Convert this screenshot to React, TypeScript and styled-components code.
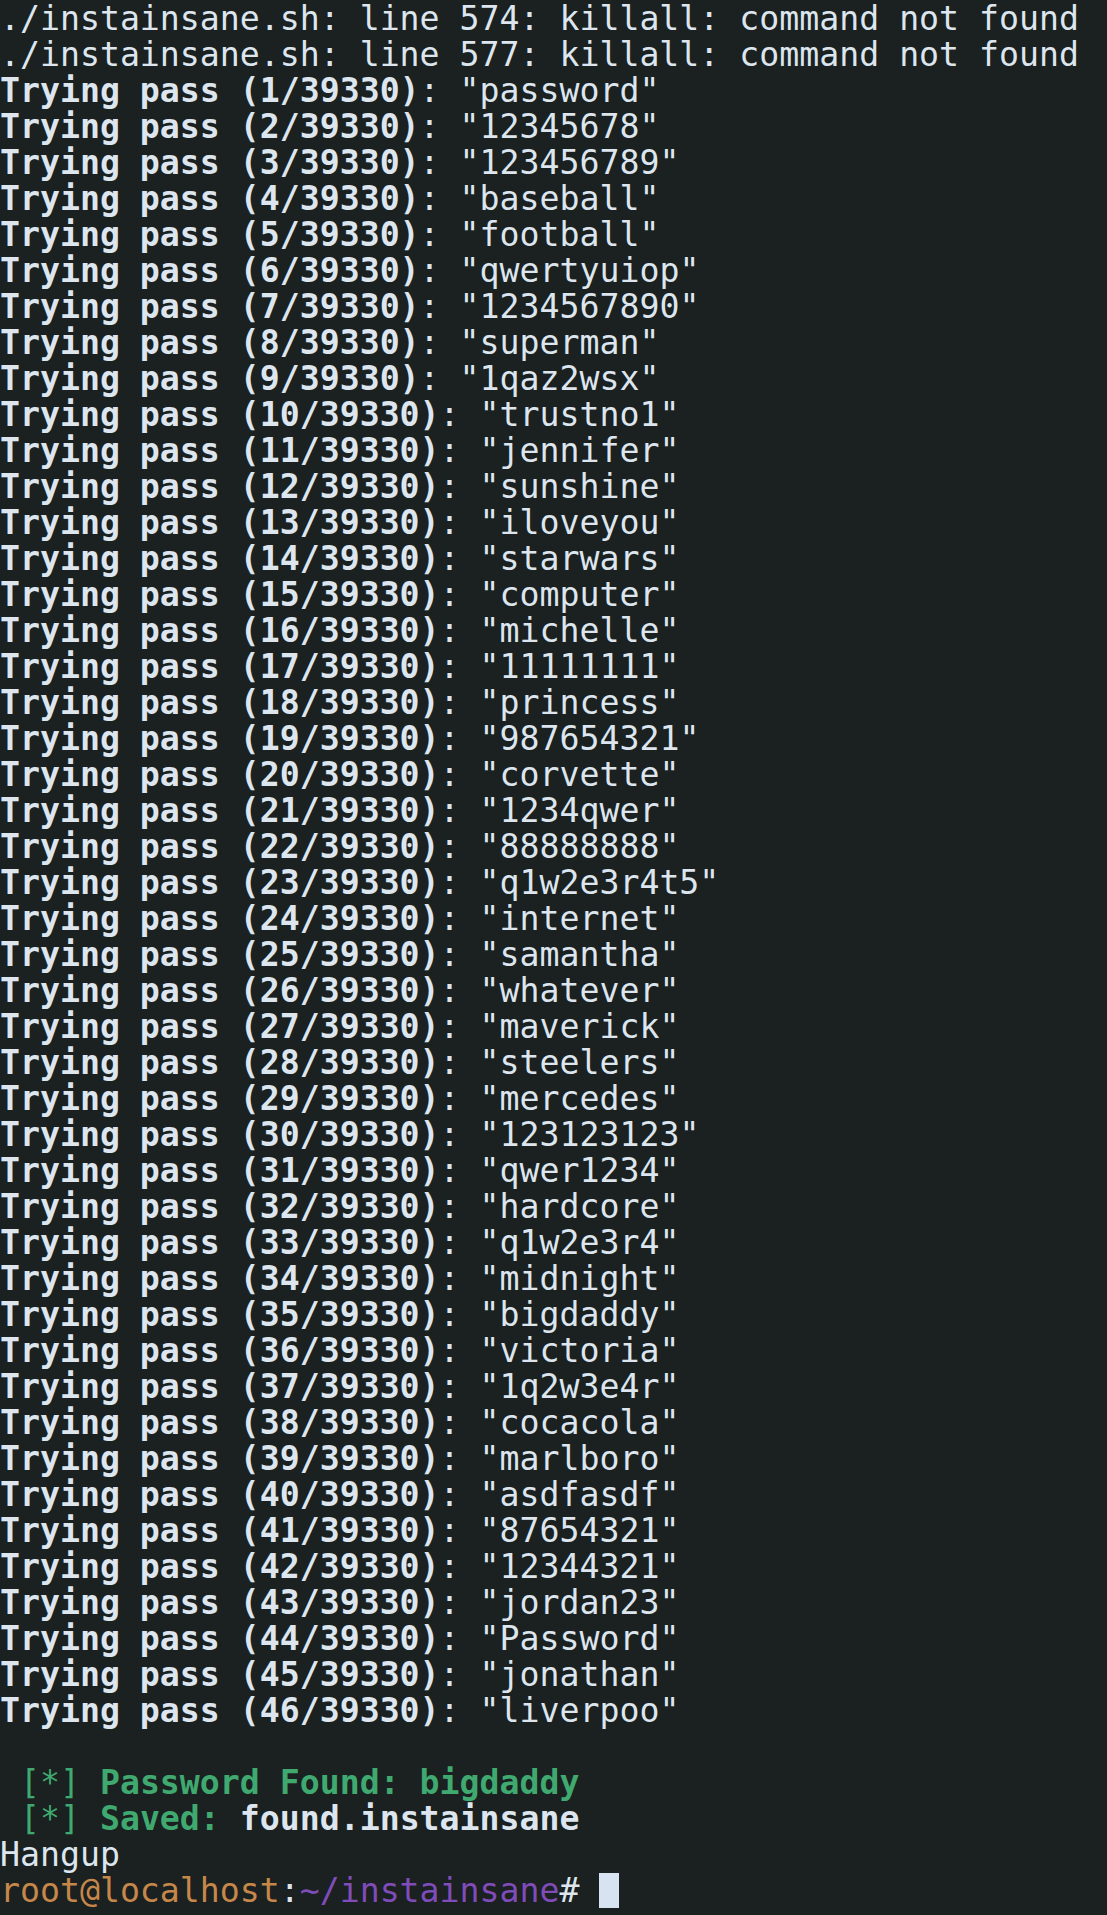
import React from "react";
import styled, { createGlobalStyle } from "styled-components";

const GlobalStyle = createGlobalStyle`
   html, body {
      margin: 0;
      padding: 0;
      background: #1b2020;
   }
`;

const Terminal = styled.div`
   box-sizing: border-box;
   min-height: 1915px;
   padding-top: 1px;
   overflow: hidden;
   background: #1b2020;
   color: #dde6ee;
   font-family: "DejaVu Sans Mono", "Liberation Mono", monospace;
   font-size: 33.2px;
   line-height: 36px;
   white-space: pre;
`;

const Line = styled.div`
   height: 36px;
`;

const Bold = styled.span`
   font-weight: 700;
`;

const Tone = styled.span<{ $tone: "green" | "orange" | "purple" | "white"; $bold?: boolean }>`
   color: ${(p) =>
      p.$tone === "green" ? "#3fa970" :
      p.$tone === "orange" ? "#c6884a" :
      p.$tone === "purple" ? "#7f4cb9" : "#dde6ee"};
   font-weight: ${(p) => (p.$bold ? 700 : 400)};
`;

const Cursor = styled.span`
   display: inline-block;
   width: 20px;
   height: 35px;
   background: #d7e3f0;
   vertical-align: top;
`;

const passwords = [
   "password", "12345678", "123456789", "baseball", "football", "qwertyuiop",
   "1234567890", "superman", "1qaz2wsx", "trustno1", "jennifer", "sunshine",
   "iloveyou", "starwars", "computer", "michelle", "11111111", "princess",
   "987654321", "corvette", "1234qwer", "88888888", "q1w2e3r4t5", "internet",
   "samantha", "whatever", "maverick", "steelers", "mercedes", "123123123",
   "qwer1234", "hardcore", "q1w2e3r4", "midnight", "bigdaddy", "victoria",
   "1q2w3e4r", "cocacola", "marlboro", "asdfasdf", "87654321", "12344321",
   "jordan23", "Password", "jonathan", "liverpoo",
];

export default function App() {
   return (
      <>
         <GlobalStyle />
         <Terminal>
            <Line>./instainsane.sh: line 574: killall: command not found</Line>
            <Line>./instainsane.sh: line 577: killall: command not found</Line>
            {passwords.map((pw, i) => (
               <Line key={pw + i}>
                  <Bold>Trying pass ({i + 1}/39330)</Bold>: "{pw}"
               </Line>
            ))}
            <Line />
            <Line>
               {" "}<Tone $tone="green">[*]</Tone> <Tone $tone="green" $bold>Password Found: bigdaddy</Tone>
            </Line>
            <Line>
               {" "}<Tone $tone="green">[*]</Tone> <Tone $tone="green" $bold>Saved:</Tone> <Bold>found.instainsane</Bold>
            </Line>
            <Line>Hangup</Line>
            <Line>
               <Tone $tone="orange">root@localhost</Tone>:<Tone $tone="purple">~/instainsane</Tone># <Cursor />
            </Line>
         </Terminal>
      </>
   );
}
